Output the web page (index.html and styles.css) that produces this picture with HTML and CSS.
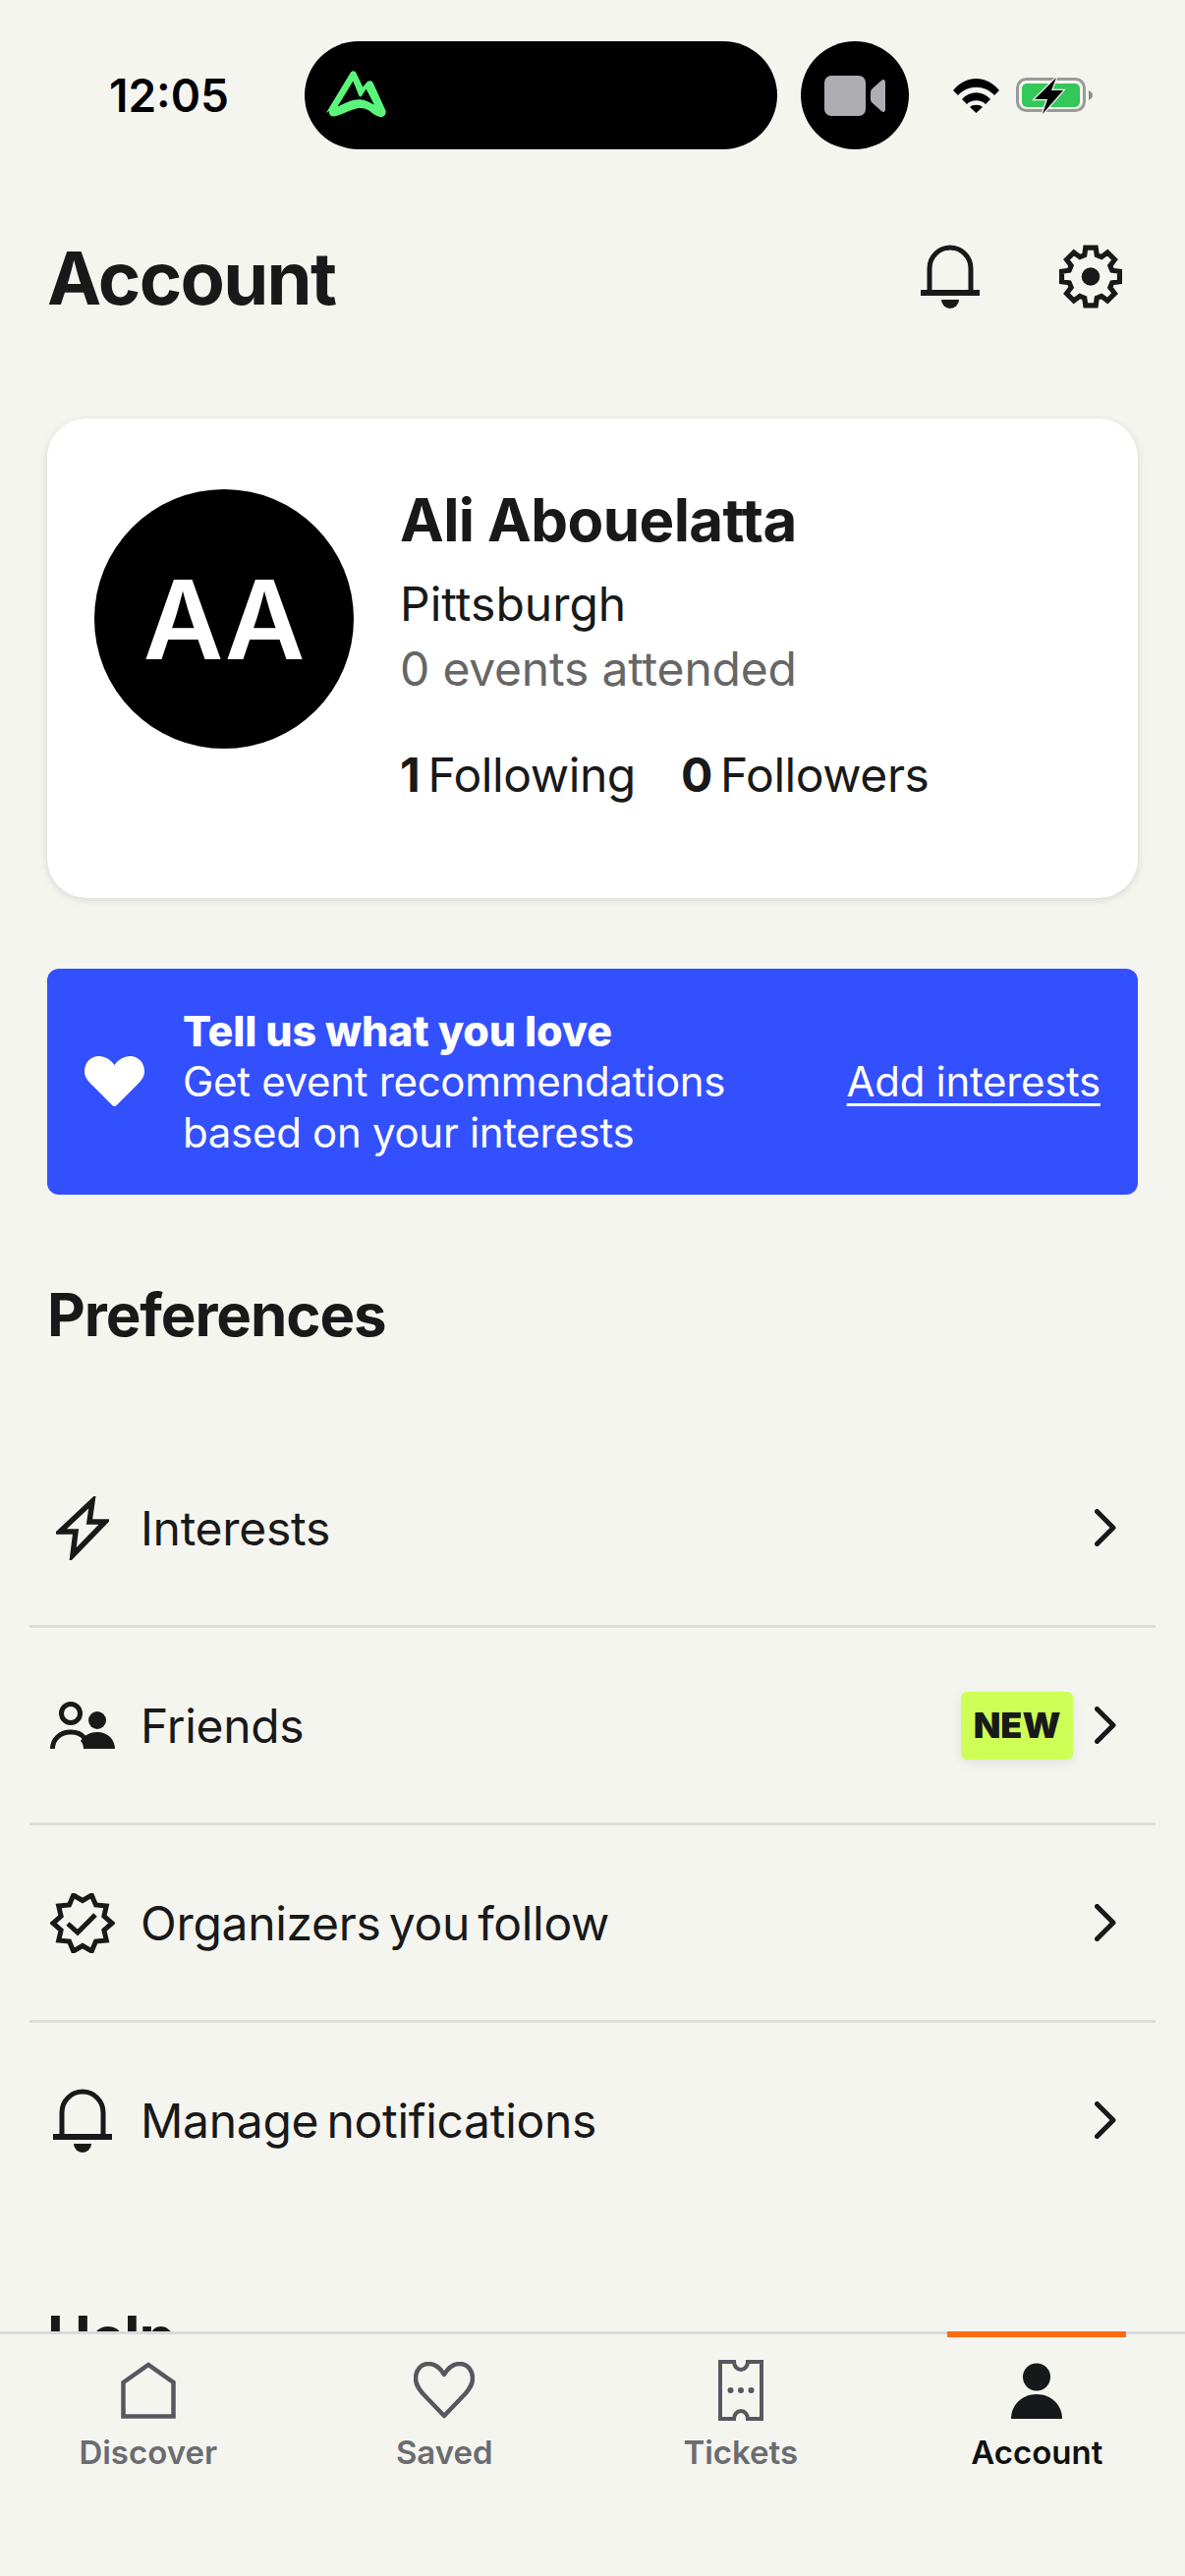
FILE: index.html
```html
<!DOCTYPE html>
<html lang="en">
<head>
  <meta charset="UTF-8" />
  <meta name="viewport" content="width=device-width, initial-scale=1.0"/>
  <title>Account</title>
  <link rel="stylesheet" href="styles.css">
</head>
<body>
  <svg class="defs" width="0" height="0" aria-hidden="true">
    <symbol id="bell" viewBox="0 0 60 67">
      <path d="M9 50V25a21 21 0 0 1 42 0v25" fill="none" stroke="currentColor" stroke-width="5"/>
      <rect x="0" y="47" width="60" height="6" fill="currentColor"/>
      <path d="M21 57h18a9 9 0 0 1-18 0z" fill="currentColor"/>
    </symbol>
    <symbol id="chevron" viewBox="0 0 22 38">
      <path d="M2.500 2.500L19 19 2.500 35.500" fill="none" stroke="currentColor" stroke-width="5" stroke-linecap="round" stroke-linejoin="round"/>
    </symbol>
  </svg>

  <div class="screen">
    <div class="content">
      <!-- status bar -->
      <div class="status">
        <div class="time">12:05</div>
        <div class="island">
          <svg class="island-logo" viewBox="93 128 186 145">
            <path fill="#5cf57c" fill-rule="evenodd" d="M95 258L170 134c6-8 14-6 18 2l20 42 14-17c6-4 13-3 17 3l39 86c3 12-6 22-18 20-12-2-21-10-31-18-12-9-25-11-40-8-22 5-40 16-62 23-14 4-26-2-22-15zM130 238c20-8 40-22 68-22 18 0 32 10 45 16l-25-48-14 22c-3 3-6 2-8-1l-18-45z"/>
          </svg>
        </div>
        <div class="cam">
          <svg class="cam-icon" viewBox="0 0 62 41">
            <rect x="0" y="0" width="42" height="41" rx="7" fill="#aeaeb2"/>
            <path d="M47 17c0-2 1-3 2-4l9-8c2-2 4-1 4 2v27c0 3-2 4-4 2l-9-8c-1-1-2-2-2-4z" fill="#aeaeb2"/>
          </svg>
        </div>
        <svg class="wifi" viewBox="0 0 47 36">
          <path d="M0 13C13 -3 34 -3 47 13l-5 5C32 7 15 7 5 18z" fill="#000"/>
          <path d="M9 22c8-9 21-9 29 0l-5 5c-5-5-14-5-19 0z" fill="#000"/>
          <path d="M17 30c3-3 10-3 13 0l-6.500 6z" fill="#000"/>
        </svg>
        <svg class="battery" viewBox="0 0 78 37">
          <rect x="1.500" y="1.500" width="68" height="32" rx="9" fill="none" stroke="#9a9a98" stroke-width="3"/>
          <rect x="6" y="6" width="59" height="24" rx="5" fill="#34c759"/>
          <path d="M74 13c2 1 4 3 4 5s-2 4-4 5z" fill="#8a8a88"/>
          <path d="M41 0L19 22h13l-5 15 21-24H36z" fill="#000" stroke="#f5f5f0" stroke-width="2.500" paint-order="stroke"/>
        </svg>
      </div>

      <div class="page-head">
        <h1>Account</h1>
        <div class="head-icons">
          <svg class="head-bell"><use href="#bell"/></svg>
          <svg class="head-gear" viewBox="0 0 64 64">
            <polygon points="26.960,3.440 37.040,3.440 38.060,10.850 42.670,12.760 48.630,8.240 55.760,15.370 51.240,21.330 53.150,25.940 60.560,26.960 60.560,37.040 53.150,38.060 51.240,42.670 55.760,48.630 48.630,55.760 42.670,51.240 38.060,53.150 37.040,60.560 26.960,60.560 25.940,53.150 21.330,51.240 15.370,55.760 8.240,48.630 12.760,42.670 10.850,38.060 3.440,37.040 3.440,26.960 10.850,25.940 12.760,21.330 8.240,15.370 15.370,8.240 21.330,12.760 25.940,10.850" fill="none" stroke="currentColor" stroke-width="5"/>
            <circle cx="32" cy="32" r="9" fill="currentColor"/>
          </svg>
        </div>
      </div>

      <div class="profile-card">
        <div class="avatar">AA</div>
        <div class="profile-info">
          <div class="name">Ali Abouelatta</div>
          <div class="city">Pittsburgh</div>
          <div class="attended">0 events attended</div>
          <div class="follow-line">
            <span><b>1</b> Following</span>
            <span><b>0</b> Followers</span>
          </div>
        </div>
      </div>

      <div class="banner">
        <svg class="banner-heart" viewBox="0 0 62 58" preserveAspectRatio="none">
          <path d="M31 10C27 4 21 0 15 0 6 0 0 8 0 17c0 7 4 12 9 17l20 22c1 1 3 1 4 0l20-22c5-5 9-10 9-17 0-9-6-17-15-17-6 0-12 4-16 10z" fill="#fff"/>
        </svg>
        <div class="banner-text">
          <div class="banner-title">Tell us what you love</div>
          <div>Get event recommendations</div>
          <div>based on your interests</div>
        </div>
        <a class="banner-link">Add interests</a>
      </div>

      <h2 class="section-title">Preferences</h2>

      <div class="menu">
        <div class="menu-row">
          <div class="menu-icon">
            <svg width="54" height="65" viewBox="0 0 54 65">
              <path d="M37 5L34 26H50L17 60 20 36H4z" fill="none" stroke="currentColor" stroke-width="5.500"/>
            </svg>
          </div>
          <div class="menu-label">Interests</div>
          <svg class="chevron"><use href="#chevron"/></svg>
        </div>
        <div class="menu-row">
          <div class="menu-icon">
            <svg width="66" height="48" viewBox="0 0 66 48">
              <circle cx="21" cy="12" r="9.500" fill="none" stroke="currentColor" stroke-width="5"/>
              <path d="M2.500 48c0-10 8-17 18.500-17 6 0 11 2 14 6" fill="none" stroke="currentColor" stroke-width="5"/>
              <circle cx="48" cy="19" r="9" fill="currentColor"/>
              <path d="M34 48c0-3-1-6-3-8 4-6 10-9 17-9 10 0 18 7 18 17z" fill="currentColor"/>
            </svg>
          </div>
          <div class="menu-label">Friends</div>
          <span class="new-badge">NEW</span>
          <svg class="chevron"><use href="#chevron"/></svg>
        </div>
        <div class="menu-row">
          <div class="menu-icon">
            <svg width="66" height="61" viewBox="0 0 66 61">
              <polygon points="63,30.500 54.900,37.600 57.300,48.100 46.500,49.100 42.300,59 33,53.500 23.700,59 19.500,49.100 8.700,48.100 11.100,37.600 3,30.500 11.100,23.400 8.700,12.900 19.500,11.900 23.700,2 33,7.500 42.300,2 46.500,11.900 57.300,12.900 54.900,23.400" fill="none" stroke="currentColor" stroke-width="5"/>
              <path d="M18 31l10 9 18-18" fill="none" stroke="currentColor" stroke-width="5"/>
            </svg>
          </div>
          <div class="menu-label">Organizers you follow</div>
          <svg class="chevron"><use href="#chevron"/></svg>
        </div>
        <div class="menu-row">
          <div class="menu-icon">
            <svg class="head-bell"><use href="#bell"/></svg>
          </div>
          <div class="menu-label">Manage notifications</div>
          <svg class="chevron"><use href="#chevron"/></svg>
        </div>
      </div>

      <h2 class="section-title help-title">Help</h2>
    </div>

    <nav class="tabbar">
      <div class="tab">
        <div class="tab-icon">
          <svg width="56" height="58" viewBox="0 0 56 58">
            <path d="M2.500 21L28 3l25.500 18v34.500h-51z" fill="none" stroke="currentColor" stroke-width="4.500"/>
          </svg>
        </div>
        <span>Discover</span>
      </div>
      <div class="tab">
        <div class="tab-icon">
          <svg width="62" height="58" viewBox="0 0 62 58">
            <path d="M31 13C27 6 21 2 15 2 7 2 2 9 2 17c0 6 3 10 7 15l22 23 22-23c4-5 7-9 7-15 0-8-5-15-13-15-6 0-12 4-16 11z" fill="none" stroke="currentColor" stroke-width="4.500" stroke-linejoin="round"/>
          </svg>
        </div>
        <span>Saved</span>
      </div>
      <div class="tab">
        <div class="tab-icon">
          <svg width="46" height="62" viewBox="0 0 46 62">
            <path d="M2 2h14a7 8 0 0 0 14 0h14v58H30a7 8 0 0 0-14 0H2z" fill="none" stroke="currentColor" stroke-width="4"/>
            <circle cx="12.500" cy="31" r="3" fill="currentColor"/>
            <circle cx="23" cy="31" r="3" fill="currentColor"/>
            <circle cx="33.500" cy="31" r="3" fill="currentColor"/>
          </svg>
        </div>
        <span>Tickets</span>
      </div>
      <div class="tab active">
        <div class="tab-icon">
          <svg width="52" height="57" viewBox="0 0 52 57">
            <circle cx="26" cy="14.500" r="14" fill="currentColor"/>
            <path d="M0 57c0-14 11-25 26-25s26 11 26 25z" fill="currentColor"/>
          </svg>
        </div>
        <span>Account</span>
      </div>
    </nav>
  </div>
</body>
</html>
```

FILE: styles.css
```css
body {
  margin: 0;
  font-family: Inter, "Liberation Sans", sans-serif;
  color: #191919;
  background: #f5f5f0;
}
.defs { position: absolute; }

.screen {
  width: 1206px;
  height: 2622px;
  display: flex;
  flex-direction: column;
  overflow: hidden;
}
.content {
  flex: 1;
  min-height: 0;
  overflow: hidden;
}

/* status bar */
.status {
  display: flex;
  align-items: center;
  height: 110px;
  padding: 42px 0 0 111px;
}
.time {
  width: 199px;
  font-size: 46px;
  font-weight: 600;
  color: #000;
}
.island {
  width: 481px;
  height: 110px;
  background: #000;
  border-radius: 55px;
  display: flex;
  align-items: center;
  padding-left: 21px;
  box-sizing: border-box;
}
.island-logo { width: 62px; height: 48px; margin-top: -3px; }
.cam {
  width: 110px;
  height: 110px;
  margin-left: 24px;
  background: #000;
  border-radius: 50%;
  display: flex;
  align-items: center;
  justify-content: center;
}
.cam-icon { width: 62px; height: 41px; }
.wifi { width: 47px; height: 36px; margin-left: 45px; }
.battery { width: 78px; height: 37px; margin-left: 17px; }

/* page header */
.page-head {
  display: flex;
  align-items: center;
  justify-content: space-between;
  height: 67px;
  margin-top: 96px;
  padding: 0 63px 0 48px;
}
h1 { margin: 3px 0 0; font-size: 74px; font-weight: 650; letter-spacing: -1.7px; }
.head-icons { display: flex; align-items: center; gap: 80px; }
.head-bell { display: block; width: 60px; height: 67px; }
.head-gear { display: block; width: 66px; height: 67px; }

/* profile */
.profile-card {
  display: flex;
  gap: 47px;
  height: 488px;
  box-sizing: border-box;
  margin: 111px 48px 0;
  padding: 72px 48px;
  background: #fff;
  border-radius: 40px;
  box-shadow: 0 2px 8px rgba(0,0,0,0.12);
}
.avatar {
  flex-shrink: 0;
  width: 264px;
  height: 264px;
  background: #000;
  border-radius: 50%;
  color: #fff;
  font-size: 112px;
  font-weight: 600;
  display: flex;
  align-items: center;
  justify-content: center;
}
.name { font-size: 60px; font-weight: 650; line-height: 62px; letter-spacing: -0.6px; }
.city { font-size: 48px; line-height: 66px; margin-top: 22px; }
.attended { font-size: 48px; line-height: 66px; color: #666; letter-spacing: -0.2px; }
.follow-line {
  display: flex;
  gap: 46px;
  font-size: 48px;
  line-height: 66px;
  margin-top: 42px;
  word-spacing: -5px;
  letter-spacing: -0.4px;
}
.follow-line b { font-weight: 700; }

/* interests banner */
.banner {
  display: flex;
  align-items: center;
  height: 230px;
  box-sizing: border-box;
  margin: 72px 48px 0;
  padding: 0 38px;
  background: #3350ff;
  border-radius: 12px;
  color: #fff;
  font-size: 42px;
  line-height: 52px;
  letter-spacing: -0.3px;
}
.banner-heart { width: 61px; height: 52px; margin-right: 39px; }
.banner-title { font-size: 43px; font-weight: 800; letter-spacing: -0.2px; }
.banner-link { margin-left: auto; text-decoration: underline; text-underline-offset: 7px; text-decoration-thickness: 3px; }

/* menu */
.section-title { margin: 87px 0 0 48px; font-size: 60px; line-height: 70px; font-weight: 650; letter-spacing: -1.1px; }
.help-title { margin-top: 87px; }
.menu { margin: 83px 30px 0; }
.menu-row {
  display: flex;
  align-items: center;
  height: 198px;
  padding: 0 40px 0 21px;
  border-bottom: 3px solid #deded9;
}
.menu-row:last-child { border-bottom: none; }
.menu-icon {
  width: 66px;
  display: flex;
  justify-content: center;
  margin-right: 26px;
}
.menu-label { flex: 1; font-size: 48px; letter-spacing: -0.3px; word-spacing: -5px; }
.new-badge {
  width: 114px;
  height: 69px;
  margin-right: 22px;
  background: #ceff56;
  border-radius: 6px;
  box-shadow: 0 4px 12px rgba(0,0,0,0.08);
  font-size: 36px;
  font-weight: 900;
  display: flex;
  align-items: center;
  justify-content: center;
}
.chevron { display: block; width: 22px; height: 38px; }

/* tab bar */
.tabbar {
  display: flex;
  height: 246px;
  border-top: 3px solid #d9d9e0;
  background: #f5f5f0;
}
.tab {
  position: relative;
  flex: 1;
  display: flex;
  flex-direction: column;
  align-items: center;
  padding-top: 26px;
  color: #57585e;
}
.tab span {
  margin-top: 12px;
  font-size: 33px;
  line-height: 40px;
  font-weight: 600;
  color: #6a6c70;
}
.tab-icon {
  height: 62px;
  display: flex;
  align-items: center;
}
.tab.active { color: #17181a; }
.tab.active span { color: #111; }
.tab.active::before {
  content: "";
  position: absolute;
  top: -3px;
  left: 59px;
  width: 182px;
  height: 6px;
  background: #ff6a13;
}
```
